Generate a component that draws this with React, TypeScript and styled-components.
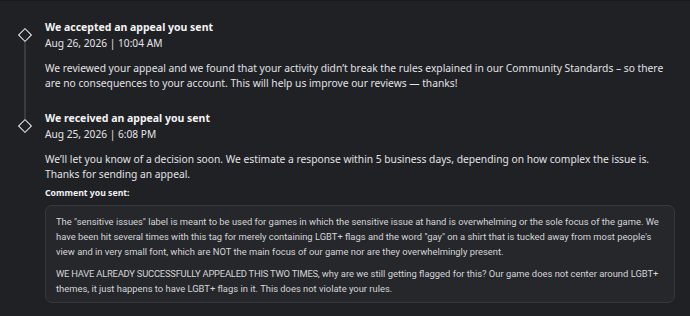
import React from 'react';
import styled, { createGlobalStyle } from 'styled-components';

const GlobalStyle = createGlobalStyle`
  html, body {
    margin: 0;
    padding: 0;
    background: #202125;
  }
  body {
    font-family: "Noto Sans", "Open Sans", sans-serif;
    -webkit-font-smoothing: antialiased;
  }
`;

const Page = styled.div`
  width: 690px;
  height: 316px;
  box-sizing: border-box;
  background: #202125;
  border-top: 1px solid #1a1b1e;
  padding: 18px 15px 0 0;
  overflow: hidden;
`;

const Item = styled.div`
  display: flex;
  flex-direction: row;
`;

const Rail = styled.div`
  width: 45px;
  flex: 0 0 45px;
  display: flex;
  flex-direction: column;
  align-items: center;
  padding-left: 5px;
  box-sizing: border-box;
`;

const Segment = styled.div<{ $height?: number; $hidden?: boolean }>`
  width: 2px;
  background: ${p => (p.$hidden ? 'transparent' : '#3a3b40')};
  ${p => (p.$height !== undefined ? `height: ${p.$height}px; flex: 0 0 auto;` : 'flex: 1;')}
`;

const Diamond = styled.div`
  width: 8px;
  height: 8px;
  margin: 2px 0;
  border: 1.5px solid #f2f2f2;
  background: #202125;
  transform: rotate(45deg);
  flex: 0 0 auto;
`;

const Body = styled.div<{ $last?: boolean }>`
  flex: 1;
  padding-bottom: ${p => (p.$last ? 0 : 20)}px;
`;

const Title = styled.div`
  font-size: 10.5px;
  font-weight: 700;
  line-height: 16px;
  color: #f4f4f5;
`;

const Stamp = styled.div`
  font-size: 10.2px;
  line-height: 16px;
  color: #e4e4e6;
`;

const Text = styled.p`
  margin: 10px 0 0;
  font-size: 10.25px;
  line-height: 14.5px;
  color: #e2e2e4;
`;

const Label = styled.div`
  margin-top: 5px;
  font-size: 8.7px;
  font-weight: 700;
  line-height: 14px;
  color: #f0f0f1;
`;

const Card = styled.div`
  margin-top: 5px;
  padding: 8px 8px 6px 10px;
  background: #26272b;
  border: 1px solid #37383d;
  border-radius: 7px;
  font-family: Roboto, "Liberation Sans", Arial, sans-serif;
  font-size: 9.4px;
  line-height: 15px;
  color: #d4d5d7;
`;

const Para = styled.p`
  margin: 0;
  & + & {
    margin-top: 7px;
  }
`;

const Caps = styled.span`
  letter-spacing: -0.22px;
`;

type Entry = {
  title: string;
  stamp: string;
  text: string[];
  comment?: React.ReactNode[];
};

const entries: Entry[] = [
  {
    title: 'We accepted an appeal you sent',
    stamp: 'Aug 26, 2026 | 10:04 AM',
    text: [
      'We reviewed your appeal and we found that your activity didn\u2019t break the rules explained in our Community Standards \u2013 so there are no consequences to your account. This will help us improve our reviews \u2014 thanks!',
    ],
  },
  {
    title: 'We received an appeal you sent',
    stamp: 'Aug 25, 2026 | 6:08 PM',
    text: [
      'We\u2019ll let you know of a decision soon. We estimate a response within 5 business days, depending on how complex the issue is. Thanks for sending an appeal.',
    ],
    comment: [
      'The "sensitive issues" label is meant to be used for games in which the sensitive issue at hand is overwhelming or the sole focus of the game. We have been hit several times with this tag for merely containing LGBT+ flags and the word "gay" on a shirt that is tucked away from most people\'s view and in very small font, which are NOT the main focus of our game nor are they overwhelmingly present.',
      <>
        <Caps>WE HAVE ALREADY SUCCESSFULLY APPEALED THIS TWO TIMES,</Caps> why are we still getting flagged
        for this? Our game does not center around LGBT+ themes, it just happens to have LGBT+ flags in it.
        This does not violate your rules.
      </>,
    ],
  },
];

export default function App() {
  return (
    <>
      <GlobalStyle />
      <Page>
        {entries.map((e, i) => {
          const first = i === 0;
          const last = i === entries.length - 1;
          return (
            <Item key={e.title}>
              <Rail>
                <Segment $height={9} $hidden={first} />
                <Diamond />
                <Segment $hidden={last} />
              </Rail>
              <Body $last={last}>
                <Title>{e.title}</Title>
                <Stamp>{e.stamp}</Stamp>
                {e.text.map(t => (
                  <Text key={t}>{t}</Text>
                ))}
                {e.comment && (
                  <>
                    <Label>Comment you sent:</Label>
                    <Card>
                      {e.comment.map((c, k) => (
                        <Para key={k}>{c}</Para>
                      ))}
                    </Card>
                  </>
                )}
              </Body>
            </Item>
          );
        })}
      </Page>
    </>
  );
}
